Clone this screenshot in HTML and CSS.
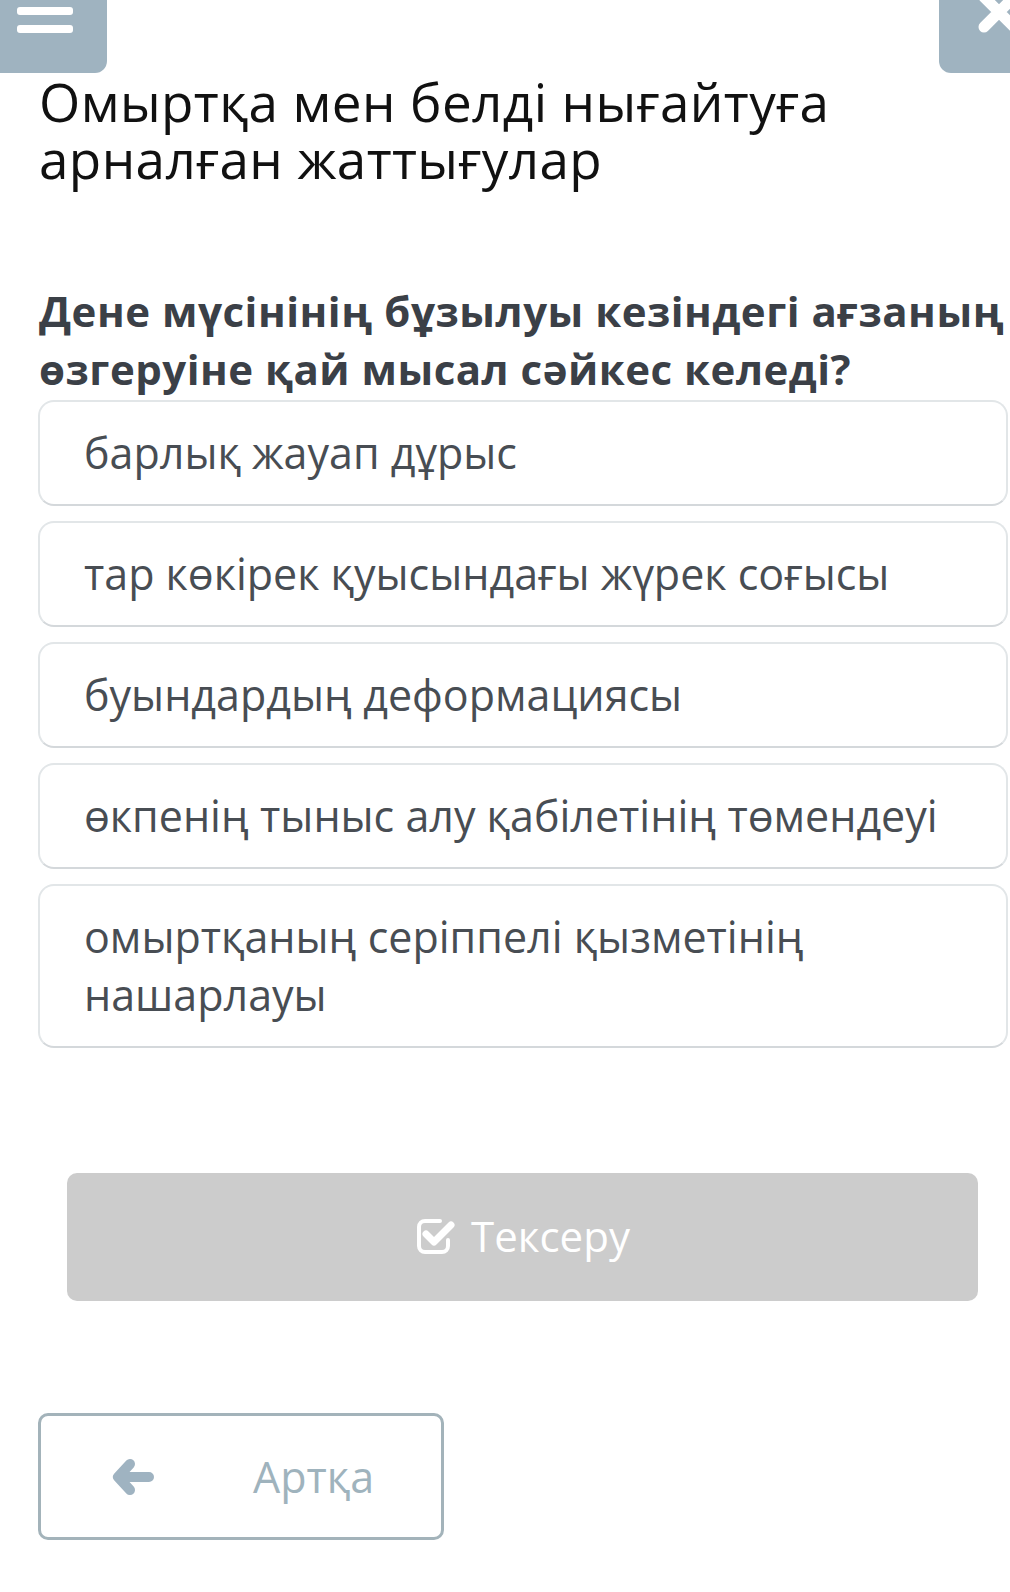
FILE: index.html
```html
<!DOCTYPE html>
<html lang="kk">
<head>
<meta charset="utf-8">
<title>Омыртқа мен белді нығайтуға арналған жаттығулар</title>
<link rel="stylesheet" href="styles.css">
</head>
<body>
<div class="page">
  <header class="topbar">
    <div class="tab tab-menu">
      <span class="bar"></span>
      <span class="bar"></span>
    </div>
    <div class="tab tab-close">
      <svg width="71" height="73" viewBox="0 0 71 73"><path d="M45 -3 L75 27 M45 27 L75 -3" stroke="#fff" stroke-width="11" stroke-linecap="round" fill="none"/></svg>
    </div>
  </header>

  <main class="content">
    <h1 class="title">Омыртқа мен белді нығайтуға арналған жаттығулар</h1>
    <h2 class="question">Дене мүсінінің бұзылуы кезіндегі ағзаның<br>өзгеруіне қай мысал сәйкес келеді?</h2>

    <ul class="options">
      <li class="option">барлық жауап дұрыс</li>
      <li class="option">тар көкірек қуысындағы жүрек соғысы</li>
      <li class="option">буындардың деформациясы</li>
      <li class="option">өкпенің тыныс алу қабілетінің төмендеуі</li>
      <li class="option">омыртқаның серіппелі қызметінің<br>нашарлауы</li>
    </ul>

    <button class="check-btn" type="button">
      <svg class="check-icon" width="40" height="40" viewBox="0 0 40 40">
        <path d="M25 5 H10 a6 6 0 0 0 -6 6 V30 a6 6 0 0 0 6 6 H27 a6 6 0 0 0 6 -6 V24" stroke="#fff" stroke-width="4" fill="none" stroke-linecap="round"/>
        <path d="M11 18 L19 26 L36 9" stroke="#fff" stroke-width="7" fill="none" stroke-linecap="round" stroke-linejoin="round"/>
      </svg>
      <span>Тексеру</span>
    </button>

    <button class="back-btn" type="button">
      <svg class="arrow-icon" width="42" height="36" viewBox="0 0 42 36">
        <path d="M37 18 H8 M18 5 L6 18 L18 31" stroke="#9fb3c1" stroke-width="10" fill="none" stroke-linecap="round" stroke-linejoin="round"/>
      </svg>
      <span>Артқа</span>
    </button>
  </main>
</div>
</body>
</html>
```

FILE: styles.css
```css
html, body {
  margin: 0;
  padding: 0;
  background: #ffffff;
}

body {
  font-family: "Open Sans", "Noto Sans", sans-serif;
  overflow-x: hidden;
}

.page {
  width: 1010px;
  overflow: hidden;
}

.topbar {
  display: flex;
  justify-content: space-between;
  height: 73px;
}

.tab {
  background: #9fb3c0;
  height: 73px;
}

.tab-menu {
  width: 107px;
  border-radius: 0 0 12px 0;
  display: flex;
  flex-direction: column;
  gap: 10px;
  padding: 7px 0 0 17px;
  box-sizing: border-box;
}

.bar {
  display: block;
  width: 56px;
  height: 8px;
  background: #ffffff;
  border-radius: 3px;
}

.tab-close {
  width: 71px;
  border-radius: 0 0 0 12px;
}

.tab-close svg {
  display: block;
}

.content {
  padding: 0 2px 0 38px;
}

.title {
  margin: 0 0 0 1px;
  font-size: 53px;
  line-height: 57px;
  font-weight: 400;
  color: #111111;
  letter-spacing: 0.4px;
}

.question {
  margin: 95px 0 0 1px;
  font-size: 42px;
  line-height: 58px;
  font-weight: 700;
  color: #3b4047;
  white-space: nowrap;
  letter-spacing: 0.5px;
}

.options {
  list-style: none;
  margin: 2px 0 0 0;
  padding: 0;
  display: flex;
  flex-direction: column;
  gap: 15px;
}

.option {
  border: 2px solid #e2e6e8;
  border-bottom-color: #d4d8db;
  border-radius: 16px;
  padding: 22px 20px 22px 44px;
  font-size: 43px;
  line-height: 58px;
  color: #484d53;
  white-space: nowrap;
}

.check-btn {
  display: flex;
  align-items: center;
  justify-content: center;
  gap: 16px;
  width: 911px;
  height: 128px;
  margin: 125px 0 0 29px;
  border: none;
  border-radius: 10px;
  background: #cccccc;
  color: #ffffff;
  font-family: inherit;
  font-size: 42px;
  padding: 0 0 4px 0;
}

.check-icon {
  display: block;
  margin-top: 2px;
}

.back-btn {
  display: flex;
  align-items: center;
  gap: 99px;
  width: 406px;
  height: 127px;
  margin: 112px 0 40px 0;
  padding: 0 0 0 71px;
  background: #ffffff;
  border: 3px solid #a3b3ba;
  border-radius: 10px;
  color: #9fb3bd;
  font-family: inherit;
  font-size: 43px;
  box-sizing: border-box;
}

.arrow-icon {
  display: block;
  flex: none;
}
```
